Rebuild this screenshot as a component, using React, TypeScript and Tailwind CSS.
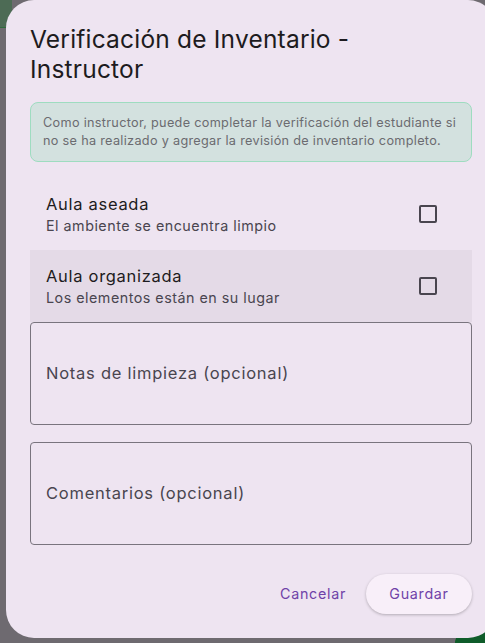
import React from 'react'

const font = { fontFamily: 'Inter, "Noto Sans", sans-serif' }

function CheckRow({ title, subtitle, active }: { title: string; subtitle: string; active?: boolean }) {
  return (
    <div className={`flex h-[72px] items-center justify-between pl-4 pr-[35px] ${active ? 'bg-[#e4dae7]' : ''}`}>
      <div className="flex flex-col">
        <span className="text-[16.5px] leading-[24px] tracking-[0.7px] text-[#1d1b20]">{title}</span>
        <span className="text-[14.3px] leading-[20px] tracking-[0.5px] text-[#49454f]">{subtitle}</span>
      </div>
      <div className="h-[18px] w-[18px] rounded-[2px] border-2 border-[#49454f]" />
    </div>
  )
}

function OutlinedArea({ label }: { label: string }) {
  return (
    <div className="flex h-[103px] items-center rounded-[4px] border border-[#79747e] px-[15px]">
      <span className="text-[16.5px] tracking-[0.75px] text-[#49454f]">{label}</span>
    </div>
  )
}

export default function App() {
  return (
    <div className="relative h-[643px] w-[485px] overflow-hidden bg-[#6e6a70]" style={font}>
      {/* dimmed page behind the dialog */}
      <div className="absolute left-0 top-0 h-[28px] w-[12px] border-b border-[#2f6b3d] bg-[#4d6b55]" />
      <div className="absolute bottom-0 right-0 h-[12px] w-[30px] rounded-tl-[12px] bg-[#0f5c2a]" />

      <div className="relative ml-[6px] flex h-[638px] w-[490px] flex-col rounded-[28px] bg-[#eee4f1] p-6">
        <h1 className="text-[24.5px] leading-[30px] tracking-[0.2px] text-[#1d1b20]">
          Verificación de Inventario -<br />Instructor
        </h1>

        <div className="mt-[18px] rounded-[8px] border border-[#9edcc0] bg-[#d3e1df] px-3 py-[11px] text-[12.7px] leading-[18px] tracking-[0.3px] text-[#6b6b70]">
          Como instructor, puede completar la verificación del estudiante si no se ha realizado y agregar la revisión de inventario completo.
        </div>

        <div className="mt-4 flex flex-col">
          <CheckRow title="Aula aseada" subtitle="El ambiente se encuentra limpio" />
          <CheckRow title="Aula organizada" subtitle="Los elementos están en su lugar" active />
        </div>

        <div className="flex flex-col gap-[17px]">
          <OutlinedArea label="Notas de limpieza (opcional)" />
          <OutlinedArea label="Comentarios (opcional)" />
        </div>

        <div className="mt-auto flex items-center justify-end gap-2">
          <button className="h-10 px-3 text-[14.3px] tracking-[0.7px] text-[#6f42a8]">Cancelar</button>
          <button className="h-10 w-[106px] rounded-full bg-[#f8eff9] text-[14.3px] tracking-[0.7px] text-[#6f42a8] shadow-[0_1px_3px_rgba(0,0,0,0.25)]">
            Guardar
          </button>
        </div>
      </div>
    </div>
  )
}
